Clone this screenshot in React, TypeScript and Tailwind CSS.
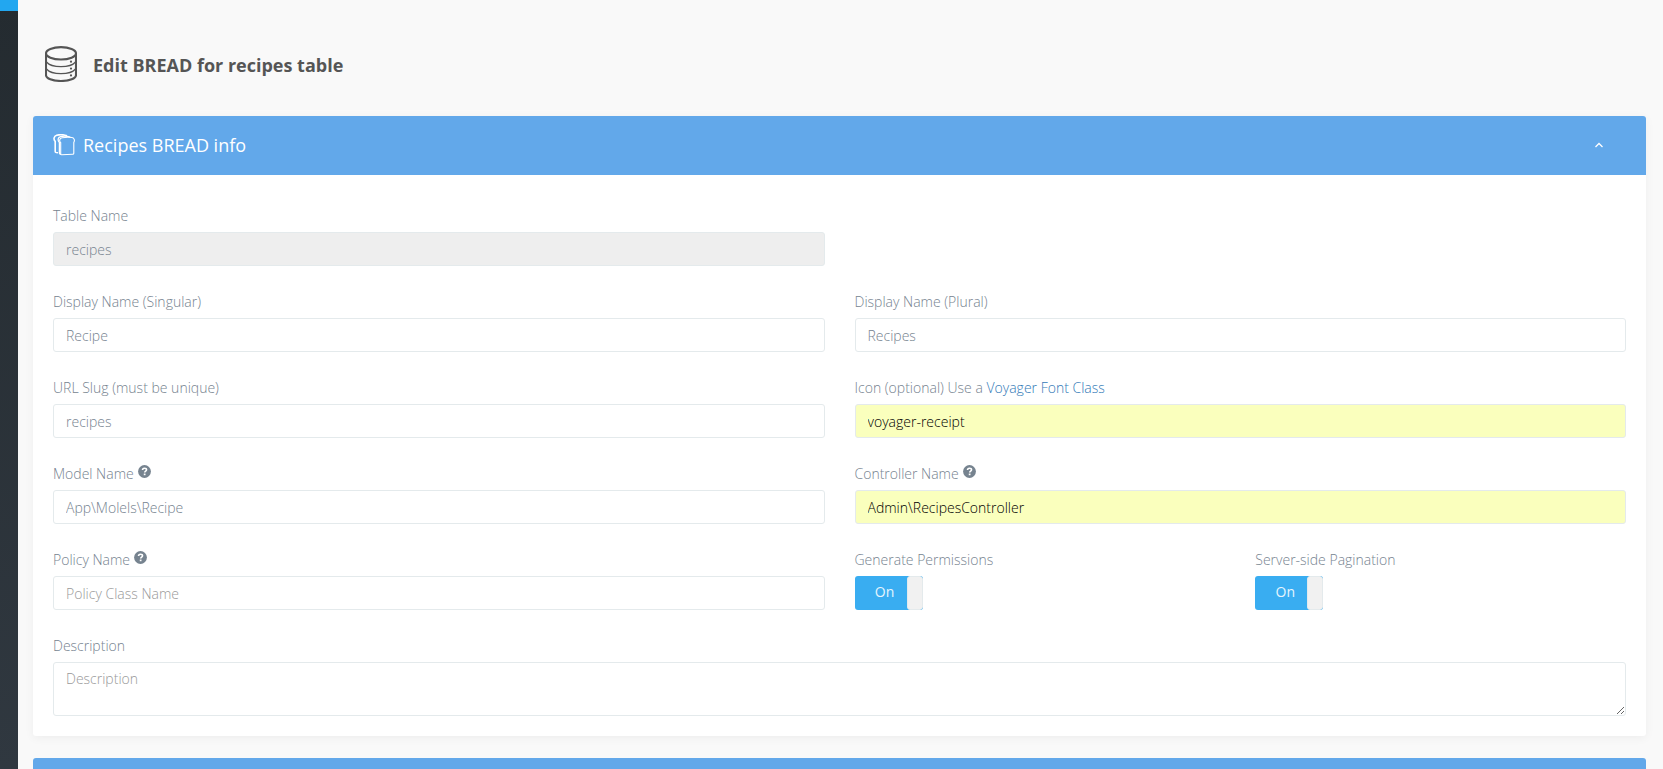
import React, { useState } from "react";

interface FieldProps {
  id: string;
  label: React.ReactNode;
  help?: string;
  children: React.ReactNode;
}

const inputBase =
  "block w-full h-[34px] rounded-[3px] border border-[#e4eaec] px-3 text-sm font-light";
const inputPlain = "bg-white text-[#76838f] placeholder:text-[#999]";
const inputAutofill = "bg-[#faffbd] text-black";

const HelpIcon: React.FC<{ title: string }> = ({ title }) => (
  <svg viewBox="0 0 14 14" className="inline-block size-[13px] ml-1 mb-2 align-middle" role="img" aria-label={title}>
    <circle cx="7" cy="7" r="6.9" fill="#76838f" />
    <path
      d="M4.9 5.5C4.9 4.1 5.8 3.5 7 3.5S9.2 4.2 9.2 5.2C9.2 6.6 7.2 6.6 7.2 8.2"
      fill="none"
      stroke="#fff"
      strokeWidth="1.7"
    />
    <path d="M6.2 9.2H8.1V11H6.2Z" fill="#fff" />
  </svg>
);

const DatabaseIcon: React.FC = () => (
  <svg viewBox="0 0 32 36" className="w-8 h-9 shrink-0" fill="none" stroke="#555" aria-hidden="true">
    <ellipse cx="16" cy="7.3" rx="15" ry="6.2" strokeWidth="2.1" />
    <path d="M1 7V29C1 32.4 7.500 35 16 35S31 32.4 31 29V7" strokeWidth="2.100" />
    <path d="M1.500 16C4 19 9 20.700 16 20.700S28 19 30.500 16" strokeWidth="1.200" />
    <path d="M1.500 23C4 26 9 27.700 16 27.700S28 26 30.500 23" strokeWidth="1.200" />
    <g fill="#555" stroke="none">
      <circle cx="26" cy="15.7" r="1.1" />
      <circle cx="26" cy="22.6" r="1.1" />
      <circle cx="26" cy="29.4" r="1.1" />
    </g>
  </svg>
);

const BreadIcon: React.FC = () => (
  <svg viewBox="0 0 22 22" className="size-[22px] shrink-0" fill="none" stroke="#fff" aria-hidden="true">
    <path
      d="M7.700 8.600C6 7 6.300 4.300 9.200 3.700C12 3.200 16.500 3.100 19 3.500C21.600 4 21.900 7 20.800 8.400V19.200C20.800 19.900 20.400 20.200 19.800 20.200L8.700 20.800C8 20.800 7.700 20.500 7.700 19.900Z"
      strokeWidth="1.100"
    />
    <path d="M8 20.300L7.300 20.100C6.700 20 6.400 19.700 6.400 19V8.400C4.300 6.600 4.700 3.400 7.600 2.600C10 2 14 2 17.300 3" strokeWidth="1.300" />
    <path d="M5 18.700L3.200 18.500C2.500 18.400 2.200 18.100 2.200 17.500V7.400C.3 5.600 .7 2 3.700 1.200C6.500 .5 10.500 .5 14 1.800" strokeWidth="1.600" />
  </svg>
);

const Field: React.FC<FieldProps> = ({ id, label, help, children }) => (
  <div>
    <label htmlFor={id} className="block mb-1.5 h-5 text-sm leading-5">
      {label}
      {help && <HelpIcon title={help} />}
    </label>
    {children}
  </div>
);

const Toggle: React.FC<{ id: string; label: string }> = ({ id, label }) => {
  const [on, setOn] = useState(true);

  return (
    <Field id={id} label={label}>
      <label className="flex w-[68px] h-[34px] overflow-hidden rounded-[3px] bg-[#39adf1] cursor-pointer">
        <input
          id={id}
          type="checkbox"
          className="sr-only"
          checked={on}
          onChange={(e) => setOn(e.target.checked)}
        />
        <span className="flex-1 pl-2 text-center text-sm leading-8 font-normal text-[#e6f5fd]">
          {on ? "On" : "Off"}
        </span>
        <span className="w-4 rounded-[3px] border border-[#e4eaec] bg-[#f1f1f1]" />
      </label>
    </Field>
  );
};

export default function App() {
  const [open, setOpen] = useState(true);

  return (
    <div className="flex h-screen overflow-hidden bg-[#f9f9f9] font-['Open_Sans','Noto_Sans',sans-serif] font-light text-[#76838f]">
      {/* Collapsed sidebar */}
      <aside className="flex flex-col w-[18px] shrink-0 bg-linear-to-b from-[#242b30] to-[#303840]">
        <div className="h-[11px] bg-[#22a7f0]" />
      </aside>

      <main className="flex-1 min-w-0 pl-[15px] pr-[17px]">
        <h1 className="flex items-center gap-4 h-[116px] pt-3 pl-3 text-lg font-bold text-[#555]">
          <DatabaseIcon />
          <span className="pt-0.5">Edit BREAD for recipes table</span>
        </h1>

        {/* BREAD info panel */}
        <section className="mb-[22px] rounded-[3px] bg-white shadow-[0_2px_10px_rgba(0,0,0,0.05)]">
          <header className="flex items-center h-[59px] pb-0.5 pl-5 pr-[43px] rounded-t-[3px] bg-[#62a8ea] text-white">
            <BreadIcon />
            <h3 className="ml-2 flex-1 text-lg font-normal">Recipes BREAD info</h3>
            <button type="button" aria-label="Toggle panel" aria-expanded={open} onClick={() => setOpen(!open)}>
              <svg viewBox="0 0 8 6" className="w-2 h-1.5" fill="none" stroke="#fff" strokeWidth="1.3">
                <path d="M.5 5L4 1.5L7.500 5" />
              </svg>
            </button>
          </header>

          {open && (
            <form className="grid grid-cols-2 gap-x-[30px] gap-y-[26px] px-5 pt-[31px] pb-5">
              <Field id="name" label="Table Name">
                <input id="name" readOnly defaultValue="recipes" className={`${inputBase} bg-[#eee] text-[#76838f]`} />
              </Field>
              <div />

              <Field id="display_singular" label="Display Name (Singular)">
                <input id="display_singular" defaultValue="Recipe" className={`${inputBase} ${inputPlain}`} />
              </Field>
              <Field id="display_plural" label="Display Name (Plural)">
                <input id="display_plural" defaultValue="Recipes" className={`${inputBase} ${inputPlain}`} />
              </Field>

              <Field id="slug" label="URL Slug (must be unique)">
                <input id="slug" defaultValue="recipes" className={`${inputBase} ${inputPlain}`} />
              </Field>
              <Field
                id="icon"
                label={
                  <>
                    Icon (optional) Use a{" "}
                    <a href="#icons" className="text-[#337ab7]">
                      Voyager Font Class
                    </a>
                  </>
                }
              >
                <input id="icon" defaultValue="voyager-receipt" className={`${inputBase} ${inputAutofill}`} />
              </Field>

              <Field id="model" label="Model Name" help="Model help">
                <input id="model" defaultValue={"App\\Molels\\Recipe"} className={`${inputBase} ${inputPlain}`} />
              </Field>
              <Field id="controller" label="Controller Name" help="Controller help">
                <input
                  id="controller"
                  defaultValue={"Admin\\RecipesController"}
                  className={`${inputBase} ${inputAutofill}`}
                />
              </Field>

              <Field id="policy" label="Policy Name" help="Policy help">
                <input id="policy" placeholder="Policy Class Name" className={`${inputBase} ${inputPlain}`} />
              </Field>
              <div className="grid grid-cols-2 gap-x-[30px]">
                <Toggle id="permissions" label="Generate Permissions" />
                <Toggle id="pagination" label="Server-side Pagination" />
              </div>

              <div className="col-span-2">
                <Field id="description" label="Description">
                  <textarea
                    id="description"
                    rows={2}
                    placeholder="Description"
                    className="block w-full h-[54px] resize-y rounded-[3px] border border-[#e4eaec] bg-white px-3 py-1.5 text-sm leading-5 font-light placeholder:text-[#999]"
                  />
                </Field>
              </div>
            </form>
          )}
        </section>

        {/* Next panel, only its top edge is in view */}
        <section className="h-[59px] rounded-t-[3px] bg-[#62a8ea]" />
      </main>
    </div>
  );
}
